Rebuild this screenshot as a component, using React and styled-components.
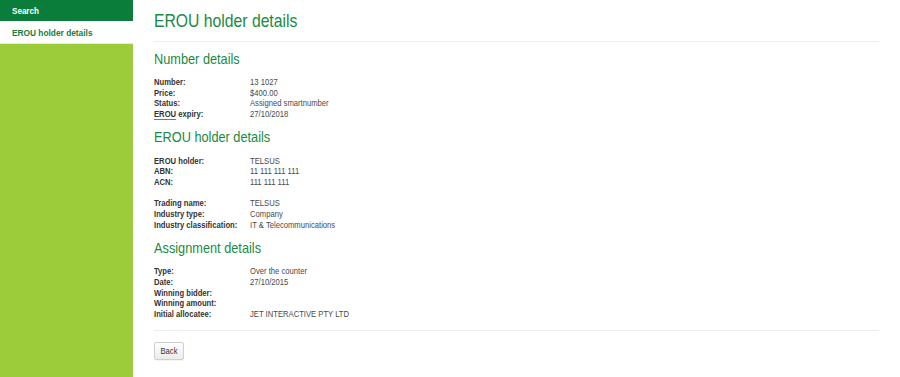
import React from "react";
import styled, { createGlobalStyle, css } from "styled-components";

const GlobalStyle = createGlobalStyle`
  html, body {
    margin: 0;
    padding: 0;
    background: #fff;
  }
  body {
    font-family: "Liberation Sans", Arial, sans-serif;
    color: #333;
  }
`;

// the text in this layout is set in a slightly condensed Arial
const narrow = css`
  transform: scaleX(0.85);
  transform-origin: left center;
  white-space: nowrap;
`;

const sections = [
  {
    title: "Number details",
    groups: [
      [
        ["Number:", "13 1027"],
        ["Price:", "$400.00"],
        ["Status:", "Assigned smartnumber"],
        ["expiry:", "27/10/2018", true],
      ],
    ],
  },
  {
    title: "EROU holder details",
    groups: [
      [
        ["EROU holder:", "TELSUS"],
        ["ABN:", "11 111 111 111"],
        ["ACN:", "111 111 111"],
      ],
      [
        ["Trading name:", "TELSUS"],
        ["Industry type:", "Company"],
        ["Industry classification:", "IT & Telecommunications"],
      ],
    ],
  },
  {
    title: "Assignment details",
    groups: [
      [
        ["Type:", "Over the counter"],
        ["Date:", "27/10/2015"],
        ["Winning bidder:", ""],
        ["Winning amount:", ""],
        ["Initial allocatee:", "JET INTERACTIVE PTY LTD"],
      ],
    ],
  },
];

const App = () => {
  return (
    <Page>
      <GlobalStyle />
      <Sidebar>
        <SearchBar>
          <NavText>Search</NavText>
        </SearchBar>
        <NavItem>
          <NavText>EROU holder details</NavText>
        </NavItem>
      </Sidebar>
      <Main>
        <Title>EROU holder details</Title>
        <Rule $top={11} $bottom={2.5} />
        {sections.map((s) => (
          <Section key={s.title}>
            <Heading>{s.title}</Heading>
            {s.groups.map((g, i) => (
              <Group key={i}>
                {g.map(([label, value, abbr]) => (
                  <Row key={label}>
                    <Label>
                      <Cell>
                        {abbr && <Abbr>EROU</Abbr>}
                        {abbr && " "}
                        {label}
                      </Cell>
                    </Label>
                    <Value>
                      <Cell>{value}</Cell>
                    </Value>
                  </Row>
                ))}
              </Group>
            ))}
          </Section>
        ))}
        <Rule $top={10} $bottom={11} />
        <Button>
          <ButtonText>Back</ButtonText>
        </Button>
      </Main>
    </Page>
  );
};

const Page = styled.div`
  display: flex;
  min-height: 377px;
`;

const Sidebar = styled.nav`
  width: 133px;
  flex-shrink: 0;
  background: #9dcc3a;
  display: flex;
  flex-direction: column;
`;

const SearchBar = styled.div`
  height: 21px;
  background: #0b7d3b;
  color: #fff;
  font-weight: bold;
  font-size: 9.5px;
  line-height: 21px;
  padding-left: 12px;
`;

const NavItem = styled.div`
  height: 23px;
  box-sizing: border-box;
  background: #fff;
  color: #177d3c;
  font-weight: bold;
  font-size: 9.8px;
  line-height: 23px;
  padding-left: 12px;
  border-bottom: 1px solid #e4efd0;
`;

const NavText = styled.span`
  display: inline-block;
  ${narrow}
`;

const Main = styled.main`
  flex: 1;
  padding: 11px 21px 0 21px;
`;

const Title = styled.h1`
  margin: 0;
  font-size: 18.5px;
  line-height: 19px;
  font-weight: normal;
  color: #1a8a41;
  ${narrow}
`;

const Rule = styled.hr`
  border: 0;
  border-top: 1px solid #eeeeee;
  margin: ${(p) => p.$top}px 0 ${(p) => p.$bottom}px 0;
`;

const Section = styled.section`
  margin-top: 8.5px;

  & + & {
    margin-top: 9.5px;
  }
`;

const Heading = styled.h2`
  margin: 0 0 11.5px 0;
  font-size: 15px;
  line-height: 15px;
  font-weight: normal;
  color: #1a8a41;
  ${narrow}
`;

const Group = styled.div`
  & + & {
    margin-top: 10.5px;
  }
`;

const Row = styled.div`
  display: flex;
  font-size: 9px;
  line-height: 10.7px;
  height: 10.7px;
`;

const Label = styled.div`
  width: 96px;
  flex-shrink: 0;
  font-weight: bold;
  color: #333;
`;

const Value = styled.div`
  color: #4a4a4a;
`;

const Cell = styled.span`
  display: inline-block;
  ${narrow}
`;

const Abbr = styled.abbr`
  text-decoration: none;
  border-bottom: 1px solid #777;
`;

const Button = styled.button`
  display: block;
  width: 30px;
  height: 18px;
  padding: 0;
  font-family: inherit;
  font-size: 9px;
  color: #333;
  background: linear-gradient(#fff, #ececec);
  border: 1px solid #cfcfcf;
  border-radius: 2px;
  box-shadow: 0 1px 1px rgba(0, 0, 0, 0.05);
`;

const ButtonText = styled.span`
  display: inline-block;
  transform: scaleX(0.85);
`;

export default App;
